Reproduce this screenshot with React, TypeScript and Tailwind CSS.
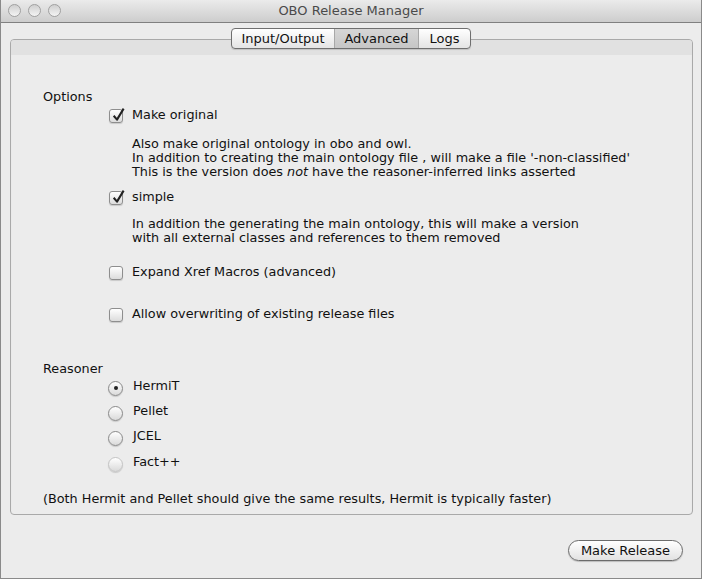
import React from "react";

const font = { fontFamily: '"DejaVu Sans", "Liberation Sans", sans-serif' };

function Check({ checked }: { checked?: boolean }) {
  return (
    <span className="relative flex h-[14px] w-[14px] shrink-0 items-center justify-center rounded-[3px] border border-[#8e8e8e] bg-gradient-to-b from-white to-[#dcdcdc] shadow-[0_1px_1px_rgba(0,0,0,0.15)]">
      {checked && (
        <svg viewBox="0 0 14 14" className="absolute -top-[3px] left-[1px] h-[15px] w-[15px]">
          <path d="M2.5 8.2 L5.6 11.8 L11.8 1.5" fill="none" stroke="#222" strokeWidth="1.9" strokeLinejoin="round" />
        </svg>
      )}
    </span>
  );
}

function Radio({ on, disabled }: { on?: boolean; disabled?: boolean }) {
  return (
    <span
      className={
        "flex h-[15px] w-[15px] shrink-0 items-center justify-center rounded-full border bg-gradient-to-b from-white to-[#dadada] shadow-[0_1px_1px_rgba(0,0,0,0.15)] " +
        (disabled ? "border-[#c4c4c4]" : "border-[#8a8a8a]")
      }
    >
      {on && <span className="h-[4px] w-[4px] rounded-full bg-[#222]" />}
    </span>
  );
}

function CheckRow({ label, checked, className }: { label: string; checked?: boolean; className?: string }) {
  return (
    <div className={"ml-[66px] flex h-[16px] items-center gap-[9px] " + (className ?? "")}>
      <Check checked={checked} />
      <span className="-mt-[3px]">{label}</span>
    </div>
  );
}

function RadioRow({ label, on, disabled, className }: { label: string; on?: boolean; disabled?: boolean; className?: string }) {
  return (
    <div className={"ml-[65px] flex h-[16px] items-center gap-[10px] " + (className ?? "")}>
      <Radio on={on} disabled={disabled} />
      <span className="-mt-[4px]">{label}</span>
    </div>
  );
}

export default function App() {
  return (
    <div
      style={font}
      className="h-[579px] w-[702px] overflow-hidden border-x border-b border-[#8a8a8a] bg-[#ececec] text-[12.8px] leading-[14px] text-[#111]"
    >
      {/* title bar */}
      <div className="relative flex h-[23px] items-center justify-center border-b border-[#808080] bg-gradient-to-b from-[#ebebeb] to-[#cdcdcd]">
        <div className="absolute left-[7px] top-[4px] flex gap-[7px]">
          {[0, 1, 2].map((i) => (
            <span
              key={i}
              className="h-[13px] w-[13px] rounded-full border border-[#a0a0a0] bg-gradient-to-b from-[#cfcfcf] to-[#f4f4f4]"
            />
          ))}
        </div>
        <span className="text-[13px] text-[#4a4a4a]">OBO Release Manager</span>
      </div>

      {/* tabs */}
      <div className="relative z-10 mt-[5px] flex justify-center pl-[1px]">
        <div className="ml-[-1px] flex h-[21px] overflow-hidden rounded-[4px] border border-[#6f6f6f] bg-gradient-to-b from-white to-[#e4e4e4] text-[13px] shadow-[0_1px_1px_rgba(0,0,0,0.15)]">
          <div className="flex w-[103px] items-center justify-center border-r border-[#a8a8a8]">Input/Output</div>
          <div className="flex w-[84px] items-center justify-center border-r border-[#a8a8a8] bg-gradient-to-b from-[#d6d6d6] to-[#c6c6c6]">
            Advanced
          </div>
          <div className="flex w-[51px] items-center justify-center">Logs</div>
        </div>
      </div>

      {/* panel */}
      <div className="-mt-[10px] ml-[9px] h-[476px] w-[683px] overflow-hidden rounded-[4px] border border-[#a9a9a9] bg-[#ececec] shadow-[inset_0_1px_1px_rgba(0,0,0,0.08)]">
        <div className="h-[15px] bg-[#e1e1e1]" />
        <div className="pl-[32px] pt-[35px]">
          <div>Options</div>
          <CheckRow label="Make original" checked className="mt-[4px]" />
          <div className="ml-[89px] mt-[13px]">
            <div>Also make original ontology in obo and owl.</div>
            <div>In addition to creating the main ontology file , will make a file '-non-classified'</div>
            <div>
              This is the version does <i>not</i> have the reasoner-inferred links asserted
            </div>
          </div>
          <CheckRow label="simple" checked className="mt-[11px]" />
          <div className="ml-[89px] mt-[11px]">
            <div>In addition the generating the main ontology, this will make a version</div>
            <div>with all external classes and references to them removed</div>
          </div>
          <CheckRow label="Expand Xref Macros (advanced)" className="mt-[20px]" />
          <CheckRow label="Allow overwriting of existing release files" className="mt-[26px]" />

          <div className="mt-[39px]">Reasoner</div>
          <RadioRow label="HermiT" on className="mt-[4px]" />
          <RadioRow label="Pellet" className="mt-[9px]" />
          <RadioRow label="JCEL" className="mt-[9px]" />
          <RadioRow label="Fact++" disabled className="mt-[10px]" />
          <div className="mt-[20px]">
            (Both Hermit and Pellet should give the same results, Hermit is typically faster)
          </div>
        </div>
      </div>

      {/* footer */}
      <div className="mr-[18px] mt-[25px] flex justify-end">
        <button className="flex h-[21px] w-[115px] items-center justify-center rounded-full border border-[#6c6c6c] bg-gradient-to-b from-white to-[#e2e2e2] text-[13px] text-[#111] shadow-[0_1px_1px_rgba(0,0,0,0.2)]">
          Make Release
        </button>
      </div>
    </div>
  );
}
